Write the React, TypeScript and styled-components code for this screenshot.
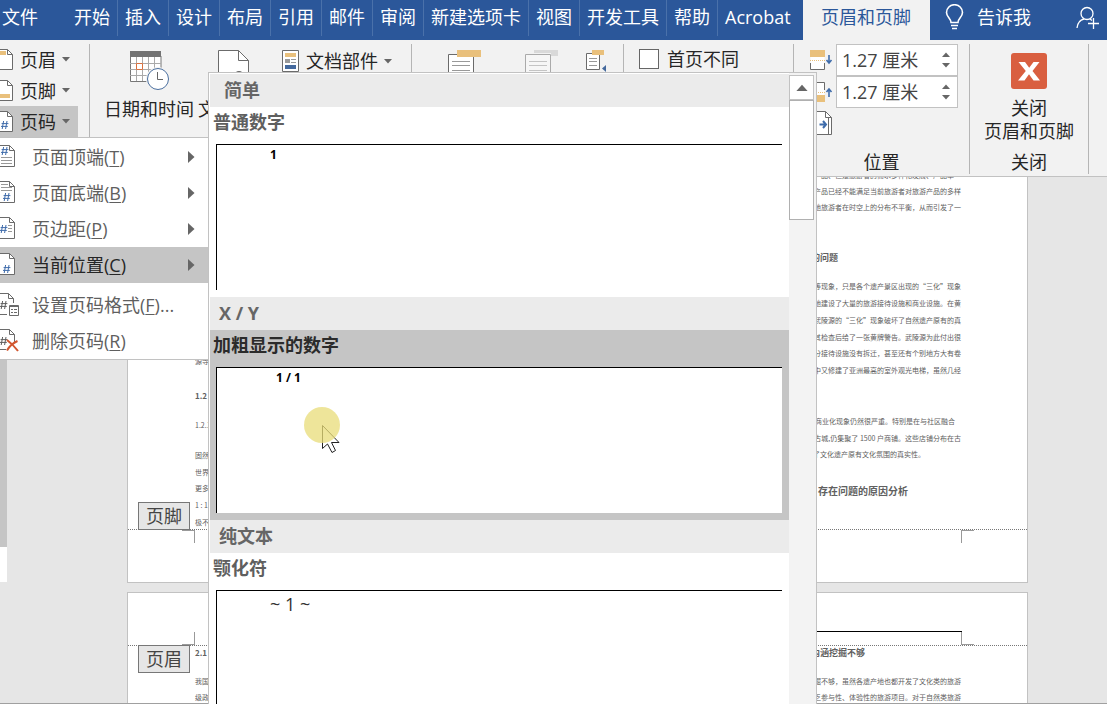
import React from "react";
import styled, { createGlobalStyle } from "styled-components";

const ui = `"Open Sans", "Noto Sans CJK SC", sans-serif`;
const cjk = `"Noto Sans CJK SC", "Open Sans", sans-serif`;

const c = {
  blue: "#2b579a",
  ribbon: "#f2f2f2",
  canvas: "#e6e6e6",
  line: "#c2c2c2",
  pick: "#c5c5c5",
  stroke: "#6b6b6b",
  ink: "#262626",
  soft: "#5f5f5f",
  gold: "#e9c07c",
  link: "#3f6cab",
};

const Global = createGlobalStyle`
  *, *::before, *::after { box-sizing: border-box; }
  body { margin: 0; }
  button, input { font: inherit; color: inherit; }
  button { background: none; border: 0; padding: 0; margin: 0; text-align: left; }
  svg { display: block; flex: none; }
`;

const Shell = styled.div`
  position: relative;
  display: flex;
  flex-direction: column;
  height: 100vh;
  overflow: hidden;
  background: ${c.canvas};
  color: ${c.ink};
  font: 18px/24px ${ui};
  white-space: nowrap;
`;

/* Tab strip */
const TabBar = styled.nav`
  display: flex;
  flex: none;
  height: 40px;
  background: ${c.blue};
  color: #fff;
`;
const Tab = styled.button<{ $active?: boolean; $plain?: boolean }>`
  flex: none;
  height: ${(p) => (p.$active ? "40px" : "36px")};
  padding: ${(p) => (p.$active ? "0 19px 6px 18px" : "0 7px 2px")};
  border-right: ${(p) => (p.$active || p.$plain ? "0" : "1px solid #4a71aa")};
  background: ${(p) => (p.$active ? c.ribbon : "transparent")};
  color: ${(p) => (p.$active ? c.blue : "#fff")};
`;
const FileTab = styled(Tab)`
  width: 67px;
  padding-left: 2px;
`;
const AddInTab = styled(Tab)`
  width: 85px;
`;
const TellMe = styled.button`
  display: flex;
  align-items: center;
  gap: 12px;
  height: 34px;
  margin-left: 14px;
`;
const Share = styled.button`
  display: flex;
  align-items: center;
  height: 36px;
  margin-left: auto;
  padding-right: 8px;
`;

/* Ribbon */
const Ribbon = styled.div`
  display: flex;
  flex: none;
  height: 137px;
  padding-top: 4px;
  background: ${c.ribbon};
  border-bottom: 1px solid ${c.line};
`;
const Group = styled.section<{ $w: number; $pad?: number }>`
  display: flex;
  flex: none;
  align-items: flex-start;
  width: ${(p) => p.$w}px;
  height: 130px;
  padding-left: ${(p) => p.$pad ?? 0}px;
  border-right: 1px solid #b5b5b5;
`;
const Stack = styled.div`
  display: flex;
  flex-direction: column;
`;
const SmallButton = styled.button<{ $open?: boolean }>`
  display: flex;
  align-items: center;
  gap: 6px;
  width: 78px;
  height: 31px;
  background: ${(p) => (p.$open ? c.pick : "transparent")};
`;
const BigButton = styled.button`
  display: flex;
  flex-direction: column;
  align-items: center;
  gap: 7px;
  margin-right: 4px;
  padding-top: 6px;
`;
const PartsButton = styled.button`
  display: flex;
  align-items: center;
  gap: 6px;
  height: 34px;
  margin-left: 8px;
`;
const NavButton = styled.button<{ $gap: number }>`
  margin-right: ${(p) => p.$gap}px;
  padding-top: 6px;
`;
const CheckLabel = styled.label`
  display: flex;
  align-items: center;
  gap: 8px;
  height: 30px;
`;
const Check = styled.input`
  appearance: none;
  width: 20px;
  height: 20px;
  margin: 0;
  border: 1px solid #666;
  background: #fff;
`;
const PositionGroup = styled(Group)`
  flex-direction: column;
  justify-content: space-between;
`;
const SpinRow = styled.div`
  display: flex;
  align-items: center;
  gap: 3px;
  height: 32px;
`;
const SpinBox = styled.div`
  display: flex;
  width: 122px;
  height: 32px;
  border: 1px solid ${c.line};
  background: #fff;
`;
const SpinInput = styled.input`
  flex: 1;
  min-width: 0;
  padding: 0 0 0 5px;
  border: 0;
  background: none;
  color: #444;
`;
const SpinArrows = styled.div`
  display: flex;
  flex-direction: column;
  justify-content: space-evenly;
  width: 24px;
  padding-left: 9px;
`;
const GroupLabel = styled.div<{ $inset?: number }>`
  align-self: stretch;
  padding-right: ${(p) => p.$inset ?? 0}px;
  text-align: center;
`;
const CloseGroup = styled(Group)`
  flex-direction: column;
  align-items: stretch;
  justify-content: space-between;
`;
const CloseButton = styled.button`
  display: flex;
  flex-direction: column;
  align-items: center;
  padding-top: 9px;
  line-height: 23px;
  text-align: center;
`;
const CloseMark = styled.span`
  margin-bottom: 8px;
`;

/* Document */
const Workspace = styled.main`
  display: flex;
  flex: 1;
  min-height: 0;
  overflow: hidden;
  border-bottom: 1px solid #a0a0a0;
`;
const Ruler = styled.div`
  width: 7px;
  height: 405px;
  background: ${c.pick};
  border-bottom: 35px solid #fff;
`;
const Pages = styled.div`
  display: flex;
  flex: 1;
  flex-direction: column;
  gap: 9px;
  margin: 0 79px 0 120px;
`;
const Sheet = styled.article<{ $first?: boolean }>`
  display: flex;
  flex: none;
  flex-direction: column;
  height: ${(p) => (p.$first ? "406px" : "400px")};
  background: #fff;
  border: 1px solid ${c.line};
  border-top-width: ${(p) => (p.$first ? "0" : "1px")};
`;
const Body = styled.div`
  display: flex;
  flex: 1;
  justify-content: space-between;
  min-height: 0;
  overflow: hidden;
  padding: 0 66px 0 67px;
  color: #606060;
  font: 7px/17px ${cjk};
`;
const Column = styled.div<{ $end?: boolean; $lift?: number }>`
  margin-top: ${(p) => p.$lift ?? 0}px;
  text-align: ${(p) => (p.$end ? "right" : "left")};
`;
const Para = styled.div<{ $before?: number; $tight?: boolean; $short?: number }>`
  margin-top: ${(p) => p.$before ?? 0}px;
  padding-right: ${(p) => p.$short ?? 0}px;
  line-height: ${(p) => (p.$tight ? 16 : 17)}px;
`;
const Title = styled(Para)<{ $size: number }>`
  font-size: ${(p) => p.$size}px;
  font-weight: 700;
`;
const Margin = styled.div<{ $foot?: boolean }>`
  position: relative;
  flex: none;
  height: 53px;
  padding: 38px 65px 0 67px;
  ${(p) => (p.$foot ? "border-top" : "border-bottom")}: 1px dotted #777;
`;
const HeaderRule = styled.div`
  width: 50%;
  margin-left: auto;
  border-top: 1px solid #000;
`;
const Corner = styled.span<{ $foot?: boolean; $right?: boolean }>`
  position: absolute;
  ${(p) => (p.$foot ? "top: 0" : "bottom: 0")};
  ${(p) => (p.$right ? "right: 53px" : "left: 54px")};
  width: 13px;
  height: 13px;
  border: 0 solid #999;
  ${(p) => (p.$right ? "border-left-width" : "border-right-width")}: 1px;
  ${(p) => (p.$foot ? "border-top-width" : "border-bottom-width")}: 1px;
`;
const AreaTag = styled.span<{ $foot?: boolean }>`
  position: absolute;
  left: 10px;
  ${(p) => (p.$foot ? "bottom: 52px" : "top: 52px")};
  z-index: 1;
  height: 28px;
  padding: 0 7px;
  border: 1px solid #777;
  background: ${c.canvas};
  color: #444;
  line-height: 26px;
`;

/* Page number menu */
const Menu = styled.div`
  position: absolute;
  top: 137px;
  left: 0;
  z-index: 2;
  width: 209px;
  padding-top: 1px;
  border: 1px solid ${c.line};
  border-left: 0;
  background: #fff;
  color: ${c.soft};
`;
const MenuItem = styled.button<{ $on?: boolean; $gap?: boolean }>`
  display: flex;
  align-items: center;
  width: 100%;
  height: 36px;
  margin-top: ${(p) => (p.$gap ? 4 : 0)}px;
  padding-right: 13px;
  background: ${(p) => (p.$on ? c.pick : "transparent")};
  color: ${(p) => (p.$on ? c.ink : "inherit")};
`;
const MenuText = styled.span`
  flex: 1;
  padding-left: 12px;
  u { text-underline-offset: 2px; text-decoration-thickness: 1px; }
`;

/* Gallery */
const Gallery = styled.div`
  position: absolute;
  top: 72px;
  bottom: 0;
  left: 208px;
  z-index: 3;
  display: flex;
  width: 609px;
  overflow: hidden;
  border: 1px solid ${c.line};
  border-bottom: 0;
  background: #fff;
`;
const GalleryList = styled.div`
  flex: 1;
  padding: 1px 0 0 1px;
`;
const Category = styled.h3<{ $lead?: boolean }>`
  height: 33px;
  margin: 0;
  padding-left: ${(p) => (p.$lead ? 14 : 9)}px;
  background: #ebebeb;
  color: #666;
  font-size: 18px;
  font-weight: 700;
  line-height: 32px;
`;
const Choice = styled.button<{ $on?: boolean }>`
  display: block;
  width: 100%;
  height: 190px;
  padding: 0 7px 7px 6px;
  background: ${(p) => (p.$on ? c.pick : "#fff")};
`;
const ChoiceName = styled.span<{ $on?: boolean }>`
  display: block;
  height: 37px;
  margin-left: -3px;
  color: ${(p) => (p.$on ? "#2b2b2b" : c.soft)};
  font-weight: 700;
  line-height: 30px;
`;
const Preview = styled.span<{ $size: number; $bold?: boolean; $indent: number }>`
  display: block;
  height: 146px;
  padding-left: ${(p) => p.$indent}px;
  border: solid #000;
  border-width: 1px 0 0 1px;
  background: #fff;
  color: ${(p) => (p.$bold ? "#000" : "#333")};
  font-size: ${(p) => p.$size}px;
  font-weight: ${(p) => (p.$bold ? 700 : 400)};
  line-height: ${(p) => (p.$bold ? 20 : 26)}px;
`;
const ScrollTrack = styled.div`
  width: 27px;
  padding: 2px 2px 0 0;
  background: #f3f3f3;
`;
const ScrollUp = styled.button`
  display: flex;
  align-items: center;
  justify-content: center;
  width: 25px;
  height: 25px;
  border: 1px solid ${c.line};
  background: #fff;
`;
const ScrollThumb = styled.div`
  width: 25px;
  height: 120px;
  border: 1px solid #b0b0b0;
  background: #fff;
`;
const Pointer = styled.svg`
  position: absolute;
  top: 407px;
  left: 304px;
  z-index: 4;
`;

/* Drawings */
const Caret = ({ w = 8, up = false }: { w?: number; up?: boolean }) => (
  <svg width={w} height={w / 2 + 1} viewBox="0 0 8 5" aria-hidden="true">
    <path d={up ? "M0 5L4 .5L8 5Z" : "M0 0L4 4.5L8 0Z"} fill="#666" />
  </svg>
);
const Hash = ({ x, y, color = c.link }: { x: number; y: number; color?: string }) => (
  <path
    transform={`translate(${x} ${y})`}
    d="M2.6 0L1.2 8M6 0L4.6 8M.6 2.6H7.4M0 5.4H6.8"
    stroke={color}
    fill="none"
  />
);
const Leaf = () => (
  <>
    <path d="M-2 .5H9.5L14.5 5.5V21.5H-2Z" fill="#fff" stroke={c.stroke} />
    <path d="M9.5 .5V5.5H14.5" fill="none" stroke={c.stroke} />
  </>
);
const RibbonLeaf = ({ kind }: { kind: "head" | "foot" | "num" }) => (
  <svg width="14" height="22" viewBox="0 0 14 22" aria-hidden="true">
    <path d="M-2 .5H7.5L12.5 5.5V20.5H-2Z" fill="#fff" stroke={c.stroke} />
    <path d="M7.5 .5V5.5H12.5" fill="none" stroke={c.stroke} />
    {kind === "head" && <path d="M0 2H6V6H0Z" fill={c.gold} />}
    {kind === "foot" && <path d="M0 14H10V18H0Z" fill={c.gold} />}
    {kind === "num" && <Hash x={1} y={10} />}
  </svg>
);
type Kind = "top" | "bottom" | "side" | "here" | "format" | "remove";
const MenuIcon = ({ kind }: { kind: Kind }) => (
  <svg width="20" height="24" viewBox="0 0 20 24" aria-hidden="true">
    {kind === "format" || kind === "remove" ? (
      <>
        <path d="M0 .5H8.5L13.5 5.5V21.5H0" fill="#fff" />
        <path
          d={kind === "format" ? "M0 .5H8.5L13.5 5.5V10M8.5 .5V5.5H13.5M0 21.5H7" : "M0 .5H9.5L14.5 5.5V13M9.5 .5V5.5H14.5M0 20.5H6"}
          fill="none"
          stroke={c.stroke}
        />
        <Hash x={0} y={8} color={c.soft} />
      </>
    ) : (
      <Leaf />
    )}
    {kind === "top" && (
      <>
        <Hash x={1} y={2} />
        <path d="M1 12.5H12M1 15.5H12M1 18.5H12" stroke="#999" />
      </>
    )}
    {kind === "bottom" && (
      <>
        <path d="M1 3.5H8M1 6.5H12M1 9.5H12" stroke="#999" />
        <Hash x={3} y={12} />
      </>
    )}
    {kind === "side" && (
      <>
        <Hash x={0} y={8} />
        <path d="M8 8.5H12M8 11.5H12M8 14.5H12" stroke="#999" />
      </>
    )}
    {kind === "here" && <Hash x={3} y={12} />}
    {kind === "format" && (
      <>
        <path d="M9.5 12.5H18.5V22.5H9.5Z" fill="#fff" stroke={c.stroke} />
        <path d="M9 13.5H19" stroke={c.stroke} />
        <path d="M11 16.5H13M14 16.5H17M11 19.5H13M14 19.5H17" stroke={c.stroke} />
      </>
    )}
    {kind === "remove" && (
      <path d="M7 11C11 14 15 18 18 22M17.5 12C13 14 9 18 7 21.5" stroke="#d2562f" strokeWidth="2" fill="none" />
    )}
  </svg>
);
const CalendarIcon = () => (
  <svg width="39" height="40" viewBox="0 0 39 40" aria-hidden="true">
    <path d="M.5 6H31V31.5H.5Z" fill="#fff" stroke="#777" />
    <path d="M0 1H31V7H0Z" fill="#737373" />
    <path d="M6.5 7V31M12.5 7V31M18.5 7V31M24.5 7V31M0 13.5H31M0 19.5H31M0 25.5H31" stroke="#aaa" />
    <path d="M6.5 13.5H12.5V19.5H6.5Z" fill="#fff" stroke="#d9703f" />
    <circle cx="28" cy="29" r="12" fill={c.ribbon} />
    <circle cx="28" cy="29" r="10.5" fill="#fff" stroke="#4a6f9f" />
    <path d="M27.5 22V29.5H33" fill="none" stroke="#666" />
  </svg>
);
const InfoIcon = () => (
  <svg width="32" height="40" viewBox="0 0 32 40" aria-hidden="true">
    <path d="M.5 .5H20.5L30.5 10.5V39.5H.5Z" fill="#fff" stroke={c.stroke} />
    <path d="M20.5 .5V10.5H30.5" fill="none" stroke={c.stroke} />
    <circle cx="21" cy="25" r="4" fill="#666" />
  </svg>
);
const PartsIcon = () => (
  <svg width="18" height="22" viewBox="0 0 18 22" aria-hidden="true">
    <path d="M.5 .5H16.5V21.5H.5Z" fill="#fff" stroke={c.stroke} />
    <path d="M3 3H14V7H3Z" fill={c.gold} />
    <path d="M3 9H8V13H3Z" fill="#999" />
    <path d="M9 9.5H14M9 12.5H14" stroke="#999" />
    <path d="M3 15H14V19H3Z" fill="#44699d" />
  </svg>
);
const NavIcon = ({ off }: { off?: boolean }) => (
  <svg width="33" height="34" viewBox="0 0 33 34" aria-hidden="true">
    <path d="M.5 4.5H25.5V33.5H.5Z" fill={off ? "#f6f6f6" : "#fff"} stroke={off ? "#aaa" : c.stroke} />
    <path d="M4 11.5H22M4 15.5H22M4 20.5H22" stroke={off ? "#c4c4c4" : "#999"} />
    <path d={off ? "M9 0H33V6H26V3H9Z" : "M9 0H33V7H9Z"} fill={off ? "#d9d9d9" : c.gold} />
  </svg>
);
const NavSmallIcon = () => (
  <svg width="21" height="22" viewBox="0 0 21 22" aria-hidden="true">
    <path d="M.5 3.5H13.5V19.5H.5Z" fill="#fff" stroke={c.stroke} />
    <path d="M3 8.5H11M3 11.5H11M3 15.5H11" stroke="#999" />
    <path d="M6 0H18V5H6Z" fill={c.gold} />
    <path d="M20 15V22L16 18.5Z" fill="#44699d" />
  </svg>
);
const MarginIcon = ({ foot }: { foot?: boolean }) => (
  <svg width="23" height="22" viewBox="0 0 23 22" aria-hidden="true">
    <path d="M.5 1.5H14.5V20.5H.5Z" fill="#fff" />
    {foot ? (
      <>
        <path d="M.5 9V1.5H14.5V9" fill="none" stroke={c.stroke} />
        <path d="M0 14H15V21H0Z" fill={c.gold} />
        <path d="M19 16V8M16.5 11L19 8L21.5 11" stroke={c.link} strokeWidth="1.6" fill="none" />
      </>
    ) : (
      <>
        <path d="M.5 14V20.5H14.5V14" fill="none" stroke={c.stroke} />
        <path d="M0 1H15V8H0Z" fill={c.gold} />
        <path d="M19 6V14M16.5 11L19 14L21.5 11" stroke={c.link} strokeWidth="1.6" fill="none" />
      </>
    )}
    <path d="M0 11.5H15" stroke={c.gold} strokeDasharray="1 1" />
  </svg>
);
const AlignIcon = () => (
  <svg width="23" height="30" viewBox="0 0 23 30" aria-hidden="true">
    <path d="M.5 3.5H15.5L21.5 9.5V26.5H.5Z" fill="#fff" stroke={c.stroke} />
    <path d="M15.5 3.5V9.5H21.5M18.5 10V26" fill="none" stroke={c.stroke} />
    <path d="M9.5 16.5H16M13 13L16 16.5L13 20" stroke={c.link} strokeWidth="2" fill="none" />
  </svg>
);

const tabs = ["开始", "插入", "设计", "布局", "引用", "邮件", "审阅", "新建选项卡", "视图", "开发工具", "帮助"];
const menu: { kind: Kind; text: string; key: string; tail?: string; sub?: boolean }[] = [
  { kind: "top", text: "页面顶端", key: "T", sub: true },
  { kind: "bottom", text: "页面底端", key: "B", sub: true },
  { kind: "side", text: "页边距", key: "P", sub: true },
  { kind: "here", text: "当前位置", key: "C", sub: true },
  { kind: "format", text: "设置页码格式", key: "F", tail: "..." },
  { kind: "remove", text: "删除页码", key: "R" },
];

const Spin = ({ label, foot }: { label: string; foot?: boolean }) => (
  <SpinRow>
    <MarginIcon foot={foot} />
    <SpinBox>
      <SpinInput aria-label={label} defaultValue="1.27 厘米" />
      <SpinArrows>
        <button aria-label="增加"><Caret up /></button>
        <button aria-label="减少"><Caret /></button>
      </SpinArrows>
    </SpinBox>
  </SpinRow>
);

export default function App() {
  return (
    <Shell lang="zh-CN">
      <Global />
      <TabBar>
        <FileTab $plain>文件</FileTab>
        {tabs.map((t) => (
          <Tab key={t}>{t}</Tab>
        ))}
        <AddInTab $plain>Acrobat</AddInTab>
        <Tab $active>页眉和页脚</Tab>
        <TellMe>
          <svg width="21" height="26" viewBox="0 0 21 26" fill="none" stroke="#fff" strokeWidth="1.6" aria-hidden="true">
            <path d="M7 18.5C7 14.5 2.5 13 2.5 8.5A8 7.8 0 0 1 18.5 8.5C18.5 13 14 14.5 14 18.5Z" />
            <path d="M7 21.5H14M8 24.5H13" />
          </svg>
          告诉我
        </TellMe>
        <Share aria-label="共享">
          <svg width="23" height="24" viewBox="0 0 23 24" fill="none" stroke="#fff" strokeWidth="1.3" aria-hidden="true">
            <circle cx="11" cy="7.5" r="6" />
            <path d="M1 22C1.500 17 4 14 8 13M14 13L16 14.5M17.5 12V23M12 17.5H23" />
          </svg>
        </Share>
      </TabBar>

      <Ribbon>
        <Group $w={90}>
          <Stack>
            <SmallButton><RibbonLeaf kind="head" />页眉<Caret /></SmallButton>
            <SmallButton><RibbonLeaf kind="foot" />页脚<Caret /></SmallButton>
            <SmallButton $open><RibbonLeaf kind="num" />页码<Caret /></SmallButton>
          </Stack>
        </Group>
        <Group $w={322} $pad={14}>
          <BigButton><CalendarIcon />日期和时间</BigButton>
          <BigButton><InfoIcon />文档信息</BigButton>
          <PartsButton><PartsIcon />文档部件<Caret /></PartsButton>
        </Group>
        <Group $w={212} $pad={36}>
          <NavButton $gap={44} aria-label="转至页眉"><NavIcon /></NavButton>
          <NavButton $gap={28} aria-label="转至页脚" disabled><NavIcon off /></NavButton>
          <NavButton $gap={0} aria-label="上一条"><NavSmallIcon /></NavButton>
        </Group>
        <Group $w={170} $pad={15}>
          <CheckLabel><Check type="checkbox" />首页不同</CheckLabel>
        </Group>
        <PositionGroup $w={176} $pad={16}>
          <Stack>
            <Spin label="页眉顶端距离" />
            <Spin label="页脚底端距离" foot />
            <button aria-label="插入对齐制表位"><AlignIcon /></button>
          </Stack>
          <GroupLabel $inset={16}>位置</GroupLabel>
        </PositionGroup>
        <CloseGroup $w={119}>
          <CloseButton>
            <CloseMark>
              <svg width="36" height="36" viewBox="0 0 36 36" aria-hidden="true">
                <rect width="36" height="36" rx="3" fill="#d95f40" />
                <path d="M7.5 9H14L18.2 14.8L22.5 9H28.5L21.5 18L29 27.5H22.5L18 21.3L13.5 27.5H7L14.8 18Z" fill="#fff" />
              </svg>
            </CloseMark>
            <span>关闭</span>
            <span>页眉和页脚</span>
          </CloseButton>
          <GroupLabel>关闭</GroupLabel>
        </CloseGroup>
      </Ribbon>

      <Workspace>
        <Ruler />
        <Pages>
          <Sheet $first>
            <Body>
              <Column $lift={176}>
                <Para>源寺</Para>
                <Title $size={8} $before={17}>1.2</Title>
                <Para $before={13}>1.2.1</Para>
                <Para $before={13}>固然</Para>
                <Para $tight>世界</Para>
                <Para>更多</Para>
                <Para>1 : 1</Para>
                <Para>极不</Para>
              </Column>
              <Column $end $lift={-10}>
                <Para $tight>旅游产品、但是旅游者的需求多样化发展、产品单一</Para>
                <Para $tight>旅游产品已经不能满足当前旅游者对旅游产品的多样</Para>
                <Para $tight>目的地旅游者在时空上的分布不平衡，从而引发了一</Para>
                <Title $size={9} $before={34} $short={123}>的问题</Title>
                <Para $before={12}>等现象，只是各个遗产景区出现的“三化”现象</Para>
                <Para>园地建设了大量的旅游接待设施和商业设施。在黄</Para>
                <Para>武陵源的“三化”现象破坏了自然遗产原有的真</Para>
                <Para $tight>其检查后给了一张黄牌警告。武陵源为此付出很</Para>
                <Para>部分接待设施没有拆迁，甚至还有个别地方大有卷</Para>
                <Para $tight>中又修建了亚洲最高的室外观光电梯，虽然几经</Para>
                <Para $before={35} $short={6}>的商业化现象仍然很严重。特别是在与社区融合</Para>
                <Para $tight>江古城,仍集聚了 1500 户商铺。这些店铺分布在古</Para>
                <Para $short={36}>坏了文化遗产原有文化氛围的真实性。</Para>
                <Title $size={10} $before={19} $short={53}>存在问题的原因分析</Title>
              </Column>
            </Body>
            <Margin $foot>
              <AreaTag $foot>页脚</AreaTag>
              <Corner $foot />
              <Corner $foot $right />
            </Margin>
          </Sheet>
          <Sheet>
            <Margin>
              <HeaderRule />
              <AreaTag>页眉</AreaTag>
              <Corner />
              <Corner $right />
            </Margin>
            <Body>
              <Column $lift={-2}>
                <Title $size={8}>2.1</Title>
                <Para $before={12} $tight>我国</Para>
                <Para $tight>级政</Para>
              </Column>
              <Column $end $lift={-2}>
                <Title $size={9} $short={96}>内涵挖掘不够</Title>
                <Para $before={12} $tight>挖掘不够，虽然各遗产地也都开发了文化类的旅游</Para>
                <Para $tight>缺乏参与性、体验性的旅游项目。对于自然类旅游</Para>
              </Column>
            </Body>
          </Sheet>
        </Pages>
      </Workspace>

      <Menu role="menu">
        {menu.map((m) => (
          <MenuItem key={m.kind} role="menuitem" $on={m.kind === "here"} $gap={m.kind === "format"}>
            <MenuIcon kind={m.kind} />
            <MenuText>
              {m.text}(<u>{m.key}</u>){m.tail}
            </MenuText>
            {m.sub && (
              <svg width="7" height="12" viewBox="0 0 7 12" aria-hidden="true">
                <path d="M0 0L6.5 6L0 12Z" fill="#666" />
              </svg>
            )}
          </MenuItem>
        ))}
      </Menu>

      <Gallery>
        <GalleryList>
          <Category $lead>简单</Category>
          <Choice>
            <ChoiceName>普通数字</ChoiceName>
            <Preview $size={12} $bold $indent={53}>1</Preview>
          </Choice>
          <Category>X / Y</Category>
          <Choice $on>
            <ChoiceName $on>加粗显示的数字</ChoiceName>
            <Preview $size={12} $bold $indent={59}>1 / 1</Preview>
          </Choice>
          <Category>纯文本</Category>
          <Choice>
            <ChoiceName>颚化符</ChoiceName>
            <Preview $size={18} $indent={53}>~ 1 ~</Preview>
          </Choice>
        </GalleryList>
        <ScrollTrack>
          <ScrollUp aria-label="向上滚动"><Caret w={12} up /></ScrollUp>
          <ScrollThumb />
        </ScrollTrack>
      </Gallery>

      <Pointer width="38" height="48" viewBox="0 0 38 48" aria-hidden="true">
        <path d="M18.5 18.5V41.5L23.5 37L28 45.5L31.5 43.5L27.5 35.5H35Z" fill="#fff" stroke="#222" />
        <circle cx="18" cy="18" r="18" fill="#e8dc78" fillOpacity=".75" />
      </Pointer>
    </Shell>
  );
}
